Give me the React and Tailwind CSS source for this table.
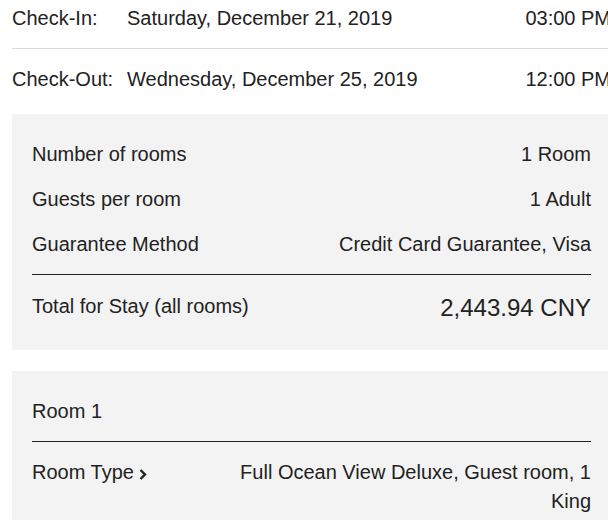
export default function App() {
  return (
    <div
      className="w-[608px] h-[520px] overflow-hidden bg-white text-[#222] text-[20px]"
      style={{ fontFamily: '"Liberation Sans", Arial, sans-serif' }}
    >
      <div className="ml-[12px] w-[599px]">
        {/* stay dates */}
        <div className="flex items-center pt-[6px] pb-[18px] leading-[24px] border-b border-[#d9d9d9]">
          <span className="w-[115px] shrink-0">Check-In:</span>
          <span className="flex-1">Saturday, December 21, 2019</span>
          <span className="whitespace-nowrap">03:00 PM</span>
        </div>
        <div className="flex items-center pt-[18px] pb-[23px] leading-[24px]">
          <span className="w-[115px] shrink-0">Check-Out:</span>
          <span className="flex-1">Wednesday, December 25, 2019</span>
          <span className="whitespace-nowrap">12:00 PM</span>
        </div>

        {/* summary */}
        <div className="bg-[#f3f3f3] px-[20px] pt-[17px] pb-[28px]">
          <div className="flex items-center justify-between h-[45px]">
            <span>Number of rooms</span>
            <span>1 Room</span>
          </div>
          <div className="flex items-center justify-between h-[45px]">
            <span>Guests per room</span>
            <span>1 Adult</span>
          </div>
          <div className="flex items-center justify-between h-[45px]">
            <span>Guarantee Method</span>
            <span>Credit Card Guarantee, Visa</span>
          </div>
          <div className="mt-[8px] border-t border-[#222]" />
          <div className="flex items-center justify-between pt-[18px] leading-[29px]">
            <span className="-mt-[3px]">Total for Stay (all rooms)</span>
            <span className="text-[24px]">2,443.94 CNY</span>
          </div>
        </div>

        {/* room details */}
        <div className="mt-[21px] bg-[#f3f3f3] px-[20px] pt-[17px] pb-[30px]">
          <div className="flex items-center h-[45px]">
            <span>Room 1</span>
          </div>
          <div className="mt-[8px] border-t border-[#222]" />
          <div className="flex pt-[16px] leading-[29px]">
            <span className="w-[190px] shrink-0 flex items-start">
              Room Type
              <svg
                className="ml-[5px] mt-[11px]"
                width="8"
                height="11"
                viewBox="0 0 8 11"
                fill="none"
                stroke="#222"
                strokeWidth="2.4"
              >
                <polyline points="1.5,1 6,5.5 1.5,10" />
              </svg>
            </span>
            <span className="flex-1 text-right">
              Full Ocean View Deluxe, Guest room, 1 King
            </span>
          </div>
        </div>
      </div>
    </div>
  )
}
